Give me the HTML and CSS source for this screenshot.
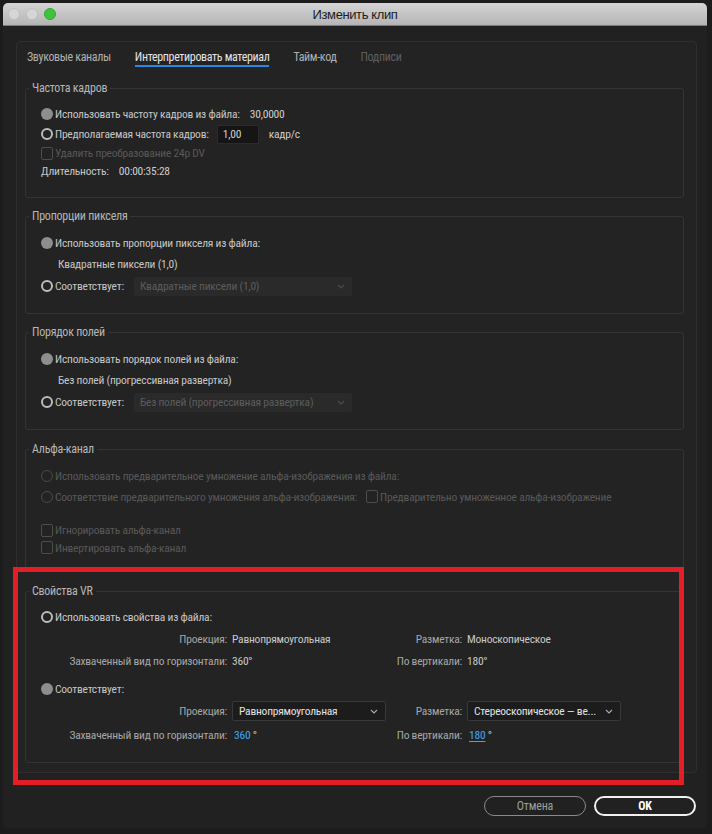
FILE: index.html
```html
<!DOCTYPE html>
<html lang="ru">
<head>
<meta charset="utf-8">
<title>Изменить клип</title>
<link rel="stylesheet" href="styles.css">
</head>
<body>
<div class="window">
  <div class="titlebar">
    <div class="lights"><span class="light"></span><span class="light"></span><span class="light green"></span></div>
    <div class="title">Изменить клип</div>
    <div></div>
  </div>
  <div class="content">
    <div class="panel">
      <div class="tabs">
        <span class="tab">Звуковые каналы</span>
        <span class="tab active">Интерпретировать материал</span>
        <span class="tab">Тайм-код</span>
        <span class="tab disabled">Подписи</span>
      </div>
      <div class="groups">
        <fieldset class="group g-fps">
          <legend>Частота кадров</legend>
          <div class="row h20"><span class="radio on"></span><span>Использовать частоту кадров из файла:</span><span class="val">30,0000</span></div>
          <div class="row h20"><span class="radio off"></span><span>Предполагаемая частота кадров:</span><span class="input">1,00</span><span class="unit">кадр/с</span></div>
          <div class="row h18 dim"><span class="check"></span><span>Удалить преобразование 24p DV</span></div>
          <div class="row h18"><span>Длительность:</span><span class="val">00:00:35:28</span></div>
        </fieldset>

        <fieldset class="group">
          <legend>Пропорции пикселя</legend>
          <div class="row h21"><span class="radio on"></span><span>Использовать пропорции пикселя из файла:</span></div>
          <div class="row h21 indent"><span>Квадратные пиксели (1,0)</span></div>
          <div class="row h24"><span class="radio off"></span><span>Соответствует:</span>
            <span class="select disabled"><span>Квадратные пиксели (1,0)</span><svg class="chev" width="8" height="5" viewBox="0 0 8 5"><path d="M1 1 L4 4 L7 1"/></svg></span>
          </div>
        </fieldset>

        <fieldset class="group">
          <legend>Порядок полей</legend>
          <div class="row h21"><span class="radio on"></span><span>Использовать порядок полей из файла:</span></div>
          <div class="row h21 indent"><span>Без полей (прогрессивная развертка)</span></div>
          <div class="row h24"><span class="radio off"></span><span>Соответствует:</span>
            <span class="select disabled"><span>Без полей (прогрессивная развертка)</span><svg class="chev" width="8" height="5" viewBox="0 0 8 5"><path d="M1 1 L4 4 L7 1"/></svg></span>
          </div>
        </fieldset>

        <fieldset class="group g-alpha">
          <legend>Альфа-канал</legend>
          <div class="row h21 dim"><span class="radio dis"></span><span>Использовать предварительное умножение альфа-изображения из файла:</span></div>
          <div class="row h21 dim"><span class="radio dis"></span><span>Соответствие предварительного умножения альфа-изображения:</span><span class="check gap"></span><span>Предварительно умноженное альфа-изображение</span></div>
          <div class="row h18 dim spaced"><span class="check"></span><span>Игнорировать альфа-канал</span></div>
          <div class="row h17 dim"><span class="check"></span><span>Инвертировать альфа-канал</span></div>
        </fieldset>

        <fieldset class="group g-vr">
          <legend>Свойства VR</legend>
          <div class="row h22"><span class="radio off"></span><span>Использовать свойства из файла:</span></div>
          <div class="vr-row">
            <span class="lbl">Проекция:</span><span class="vv">Равнопрямоугольная</span>
            <span class="lbl">Разметка:</span><span class="vv">Моноскопическое</span>
          </div>
          <div class="vr-row">
            <span class="lbl">Захваченный вид по горизонтали:</span><span class="vv">360°</span>
            <span class="lbl">По вертикали:</span><span class="vv">180°</span>
          </div>
          <div class="row h22 vr-gap"><span class="radio on"></span><span>Соответствует:</span></div>
          <div class="vr-row">
            <span class="lbl">Проекция:</span>
            <span class="select active"><span>Равнопрямоугольная</span><svg class="chev" width="8" height="5" viewBox="0 0 8 5"><path d="M1 1 L4 4 L7 1"/></svg></span>
            <span class="lbl">Разметка:</span>
            <span class="select active"><span>Стереоскопическое — ве...</span><svg class="chev" width="8" height="5" viewBox="0 0 8 5"><path d="M1 1 L4 4 L7 1"/></svg></span>
          </div>
          <div class="vr-row vr-last">
            <span class="lbl">Захваченный вид по горизонтали:</span><span class="vv"><span class="blue">360</span> °</span>
            <span class="lbl">По вертикали:</span><span class="vv"><span class="blue under">180</span> °</span>
          </div>
        </fieldset>
      </div>
    </div>
    <div class="buttons">
      <button class="btn">Отмена</button>
      <button class="btn primary">OK</button>
    </div>
  </div>
  <div class="highlight"></div>
</div>
</body>
</html>
```

FILE: styles.css
```css
* { box-sizing: border-box; }

html, body { margin: 0; }

body {
  background: #1c1c1c;
  padding: 3px 0 0 3px;
  height: 834px;
  overflow: hidden;
  font-family: Roboto, "Liberation Sans", sans-serif;
  font-size: 11.5px;
  font-stretch: 87%;
  letter-spacing: -0.22px;
  color: #c6c6c6;
}

.window {
  position: relative;
  width: 704px;
  height: 825px;
  background: #212121;
  border-radius: 5px 5px 4px 4px;
  overflow: hidden;
}

.titlebar {
  height: 23px;
  background: linear-gradient(#d4d4d4, #b5b5b5);
  border-bottom: 1px solid #7a7a7a;
  display: grid;
  grid-template-columns: 1fr auto 1fr;
  align-items: center;
}

.lights { display: flex; gap: 6px; padding-left: 5px; }
.light {
  width: 12px; height: 12px; border-radius: 50%;
  background: #d6d6d6;
  border: 1px solid #c0c0c0;
}
.light.green { background: #3fc33e; border-color: #35a834; }

.title {
  font-family: "Liberation Sans", Arial, sans-serif;
  font-size: 13px;
  font-stretch: normal;
  letter-spacing: -0.4px;
  color: #1c1c1c;
}

.content { padding: 15px 10px 0 13px; }

.panel {
  height: 732px;
  background: #232323;
  border: 1px solid #2f2f2f;
  border-radius: 4px;
}

.tabs { display: flex; gap: 24px; padding: 7px 0 0 10px; }
.tab {
  font-size: 12px;
  letter-spacing: -0.35px;
  line-height: 16px;
  color: #b0b0b0;
  border-bottom: 2px solid transparent;
}
.tab.active { color: #e4e4e4; border-bottom-color: #2d86e4; }
.tab.disabled { color: #5f5f5f; }

.groups {
  display: flex;
  flex-direction: column;
  gap: 10px;
  padding: 13px 12px 0 8px;
}

.group {
  margin: 0;
  padding: 8px 12px 15px 3px;
  border: 1px solid #343434;
  border-radius: 3px;
  min-width: 0;
}
.group legend {
  padding: 0 3px;
  font-size: 12px;
  letter-spacing: -0.25px;
  line-height: 16px;
  color: #b6b6b6;
}
.g-fps { padding-bottom: 17px; }
.g-alpha { margin-top: 1px; }
.g-vr { margin-top: 1px; padding-top: 7px; padding-bottom: 16px; }

.row {
  display: flex;
  align-items: center;
  height: 20px;
  padding-left: 12px;
  white-space: nowrap;
}
.h17 { height: 17px; }
.h18 { height: 18px; }
.h21 { height: 21px; }
.h22 { height: 22px; }
.h24 { height: 24px; }
.indent { padding-left: 29px; }
.spaced { margin-top: 14px; }
.vr-gap { margin-top: 6px; }
.dim { color: #585858; }

.radio {
  width: 12px; height: 12px;
  border-radius: 50%;
  margin-right: 2px;
  flex: none;
}
.radio.on { background: #8e8e8e; }
.radio.off { border: 2px solid #bcbcbc; }
.radio.dis { border: 1.5px solid #4a4a4a; }

.check {
  width: 12px; height: 13px;
  border: 1px solid #4d4d4d;
  border-radius: 2px;
  margin-right: 2px;
  flex: none;
}
.check.gap { margin-left: 9px; }

.val { margin-left: 10px; color: #cdcdcd; }

.input {
  width: 42px; height: 19px;
  margin-left: 8px;
  background: #151515;
  border: 1px solid #2b2b2b;
  padding-left: 5px;
  line-height: 17px;
  color: #d2d2d2;
}
.unit { margin-left: 10px; color: #cdcdcd; }

.select {
  display: flex;
  align-items: center;
  justify-content: space-between;
  height: 19px;
  padding: 0 7px 0 6px;
  border-radius: 2px;
}
.select.disabled {
  width: 218px;
  margin-left: 10px;
  background: #2a2a2a;
  color: #5c5c5c;
}
.select.disabled .chev path { stroke: #4c4c4c; }
.select.active {
  width: 154px;
  height: 20px;
  background: #1c1c1c;
  border: 1px solid #383838;
  color: #e2e2e2;
}
.chev path { fill: none; stroke: #a8a8a8; stroke-width: 1.2; }

.vr-row {
  display: grid;
  grid-template-columns: 186px 154px 71px 1fr;
  column-gap: 5px;
  align-items: center;
  height: 22px;
  padding-left: 12px;
  white-space: nowrap;
}
.vr-last { margin-top: 2px; }
.lbl { text-align: right; color: #a6a6a6; }
.vv { color: #c9c9c9; }
.blue { color: #3fa6f3; padding-left: 2px; }
.under { text-decoration: underline; text-underline-offset: 2px; }

.buttons {
  display: flex;
  justify-content: flex-end;
  gap: 8px;
  margin-top: 23px;
  padding-right: 1px;
}
.btn {
  width: 102px; height: 20px;
  border-radius: 10px;
  background: transparent;
  border: 1.5px solid #8a8a8a;
  color: #9d9d9d;
  font-family: inherit;
  font-size: 12px;
  font-stretch: 87%;
  letter-spacing: -0.2px;
  padding: 0;
}
.btn.primary { border: 2px solid #f0f0f0; color: #ffffff; font-weight: bold; }

.highlight {
  position: absolute;
  left: 10px;
  top: 564px;
  width: 671px;
  height: 218px;
  border: 5px solid #e41e26;
  pointer-events: none;
}
```
